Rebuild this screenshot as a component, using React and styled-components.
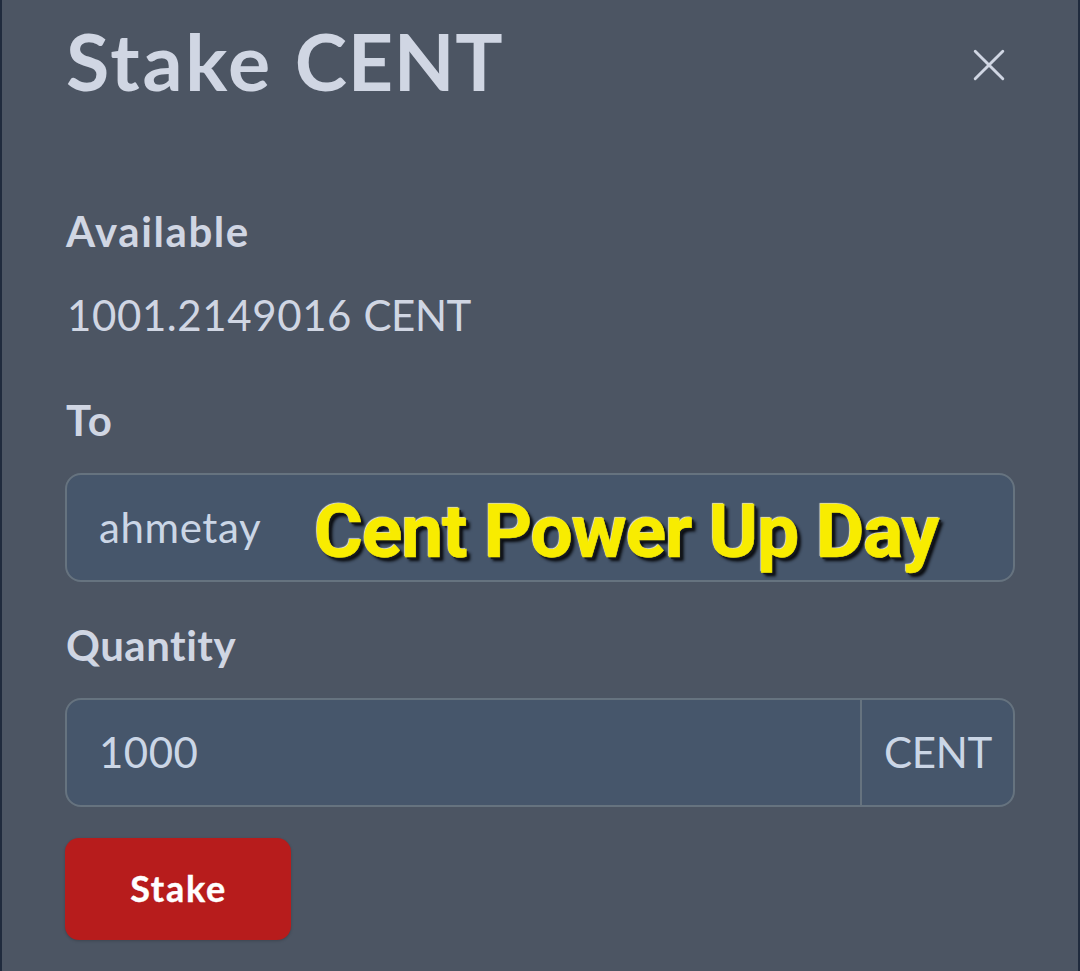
import React, { useState } from 'react'
import styled, { createGlobalStyle } from 'styled-components';

const App = () => {
  const [to, setTo] = useState("ahmetay");
  const [quantity, setQuantity] = useState("1000");

  return (
    <>
      <GlobalStyle />
      <Modal>
        <Header>
          <Title>Stake <Token $spacing="0.6px">CENT</Token></Title>
          <CloseButton aria-label="Close">
            <svg width="32" height="32" viewBox="0 0 32 32">
              <path d="M2.2 2.2L29.8 29.8M29.8 2.2L2.2 29.8" />
            </svg>
          </CloseButton>
        </Header>

        <Label $spacing="1.6px">Available</Label>
        <Balance>1001.2149016 <Token $spacing="-0.4px">CENT</Token></Balance>

        <Label $spacing="1.5px">To</Label>
        <Field>
          <Input value={to} $spacing="0.6px" onChange={(e) => setTo(e.target.value)} />
          <Caption>Cent Power Up Day</Caption>
        </Field>

        <Label $spacing="0.5px">Quantity</Label>
        <Field>
          <Input value={quantity} $spacing="0.5px" onChange={(e) => setQuantity(e.target.value)} />
          <Unit>CENT</Unit>
        </Field>

        <StakeButton>Stake</StakeButton>
      </Modal>
    </>
  )
}

export default App;

const GlobalStyle = createGlobalStyle`
  * {
    box-sizing: border-box;
  }

  body {
    margin: 0;
    background: #4c5563;
    font-family: Lato, sans-serif;
    color: #d0d6e3;
  }
`
const Modal = styled.div`
  display: flex;
  flex-direction: column;
  height: 971px;
  padding: 14px 63px 0;
  border: solid #202b3d;
  border-width: 0 2px;
  overflow: hidden;
`
const Header = styled.div`
  display: flex;
  justify-content: space-between;
  align-items: center;
  height: 102px;
  margin-bottom: 85px;
`
const Title = styled.h1`
  margin: 0 0 8px 1px;
  font-size: 79px;
  font-weight: 700;
  line-height: 94px;
  letter-spacing: 2.7px;
`
const Token = styled.span`
  letter-spacing: ${props => props.$spacing};
`
const CloseButton = styled.button`
  display: flex;
  padding: 0;
  margin-right: 10px;
  border: none;
  background: none;
  cursor: pointer;

  path {
    fill: none;
    stroke: #d0d6e3;
    stroke-width: 2.9;
    stroke-linecap: round;
  }
`
const Label = styled.label`
  height: 60px;
  line-height: 60px;
  padding-left: 1px;
  font-size: 42px;
  font-weight: 700;
  letter-spacing: ${props => props.$spacing};
`
const Balance = styled.div`
  height: 60px;
  margin: 24px 0 45px;
  padding-left: 2px;
  line-height: 60px;
  font-size: 42px;
  letter-spacing: 0.6px;
`
const Field = styled.div`
  position: relative;
  display: flex;
  height: 109px;
  flex-shrink: 0;
  margin: 23px 0 33px;
  border: 2px solid #66737f;
  border-radius: 16px;
  background: #46566b;
  overflow: hidden;

  & + button {
    margin-top: -2px;
  }
`
const Input = styled.input`
  flex: 1;
  min-width: 0;
  padding: 0 0 2px 32px;
  border: none;
  outline: none;
  background: transparent;
  color: #cbd6e6;
  font-family: inherit;
  font-size: 42px;
  letter-spacing: ${props => props.$spacing};
`
const Unit = styled.div`
  width: 153px;
  padding-left: 22px;
  border-left: 2px solid #66737f;
  line-height: 105px;
  font-size: 42px;
  letter-spacing: -0.3px;
  color: #cbd6e6;
`
const Caption = styled.span`
  position: absolute;
  left: 247px;
  top: 12px;
  font-family: Roboto, sans-serif;
  font-size: 75px;
  font-weight: 700;
  line-height: 88px;
  letter-spacing: -1.15px;
  white-space: nowrap;
  color: #f8ec00;
  -webkit-text-stroke: 0.6px #f8ec00;
  text-shadow: -1px -1px 1px #e6e6dc, 2px 2px 1px #15181c, 4px 4px 3px #0a0c10;
`
const StakeButton = styled.button`
  width: 226px;
  height: 102px;
  flex-shrink: 0;
  padding: 0 0 2px 1px;
  border: none;
  border-radius: 14px;
  background: #b71c1c;
  box-shadow: 0 1px 3px rgba(0, 0, 0, 0.2);
  color: #fff;
  font-family: inherit;
  font-size: 36px;
  font-weight: 700;
  letter-spacing: 1.7px;
  cursor: pointer;
  -webkit-text-stroke: 0.4px #fff;
`
